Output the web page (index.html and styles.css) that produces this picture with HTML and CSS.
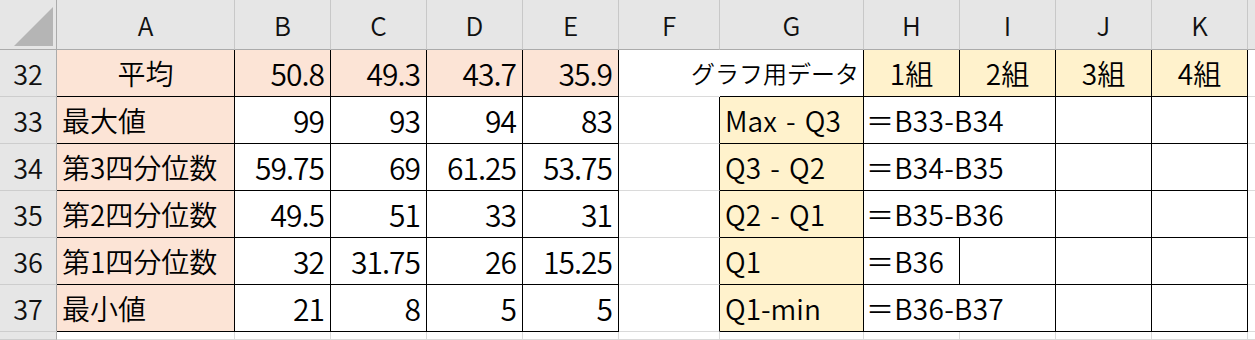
FILE: index.html
```html
<!DOCTYPE html>
<html lang="ja">
<head>
<meta charset="utf-8">
<title>Sheet</title>
<link rel="stylesheet" href="styles.css">
</head>
<body>
<div class="sheet">
  <!-- column headers -->
  <div class="corner"><svg width="56" height="49" viewBox="0 0 56 49"><polygon points="14,46 53,46 53,7" fill="#b5b5b5"/></svg></div>
  <div class="hd">A</div>
  <div class="hd">B</div>
  <div class="hd">C</div>
  <div class="hd">D</div>
  <div class="hd">E</div>
  <div class="hd">F</div>
  <div class="hd">G</div>
  <div class="hd">H</div>
  <div class="hd">I</div>
  <div class="hd">J</div>
  <div class="hd">K</div>
  <div class="hd hd-end"></div>

  <!-- row 32 -->
  <div class="rh">32</div>
  <div class="c pk bk ctr">平均</div>
  <div class="c pk bk r n">50.8</div>
  <div class="c pk bk r n">49.3</div>
  <div class="c pk bk r n">43.7</div>
  <div class="c pk bk r n">35.9</div>
  <div class="c noright"></div>
  <div class="c bk r label">グラフ用データ</div>
  <div class="c yl bk ctr">1組</div>
  <div class="c yl bk ctr">2組</div>
  <div class="c yl bk ctr">3組</div>
  <div class="c yl bk ctr">4組</div>
  <div class="c end"></div>

  <!-- row 33 -->
  <div class="rh">33</div>
  <div class="c pk bk">最大値</div>
  <div class="c bk r n">99</div>
  <div class="c bk r n">93</div>
  <div class="c bk r n">94</div>
  <div class="c bk r n">83</div>
  <div class="c brk"></div>
  <div class="c yl bk g">Max - Q3</div>
  <div class="c bk span2 f">＝B33-B34</div>
  <div class="c bk"></div>
  <div class="c bk"></div>
  <div class="c end"></div>

  <!-- row 34 -->
  <div class="rh">34</div>
  <div class="c pk bk">第3四分位数</div>
  <div class="c bk r n">59.75</div>
  <div class="c bk r n">69</div>
  <div class="c bk r n">61.25</div>
  <div class="c bk r n">53.75</div>
  <div class="c brk"></div>
  <div class="c yl bk g">Q3 - Q2</div>
  <div class="c bk span2 f">＝B34-B35</div>
  <div class="c bk"></div>
  <div class="c bk"></div>
  <div class="c end"></div>

  <!-- row 35 -->
  <div class="rh">35</div>
  <div class="c pk bk">第2四分位数</div>
  <div class="c bk r n">49.5</div>
  <div class="c bk r n">51</div>
  <div class="c bk r n">33</div>
  <div class="c bk r n">31</div>
  <div class="c brk"></div>
  <div class="c yl bk g">Q2 - Q1</div>
  <div class="c bk span2 f">＝B35-B36</div>
  <div class="c bk"></div>
  <div class="c bk"></div>
  <div class="c end"></div>

  <!-- row 36 -->
  <div class="rh">36</div>
  <div class="c pk bk">第1四分位数</div>
  <div class="c bk r n">32</div>
  <div class="c bk r n">31.75</div>
  <div class="c bk r n">26</div>
  <div class="c bk r n">15.25</div>
  <div class="c brk"></div>
  <div class="c yl bk g">Q1</div>
  <div class="c bk f">＝B36</div>
  <div class="c bk"></div>
  <div class="c bk"></div>
  <div class="c bk"></div>
  <div class="c end"></div>

  <!-- row 37 -->
  <div class="rh">37</div>
  <div class="c pk bk">最小値</div>
  <div class="c bk r n">21</div>
  <div class="c bk r n">8</div>
  <div class="c bk r n">5</div>
  <div class="c bk r n">5</div>
  <div class="c brk"></div>
  <div class="c yl bk g">Q1-min</div>
  <div class="c bk span2 f">＝B36-B37</div>
  <div class="c bk"></div>
  <div class="c bk"></div>
  <div class="c end"></div>

  <!-- row 38 (partial) -->
  <div class="rh"></div>
  <div class="c"></div>
  <div class="c"></div>
  <div class="c"></div>
  <div class="c"></div>
  <div class="c"></div>
  <div class="c"></div>
  <div class="c"></div>
  <div class="c"></div>
  <div class="c"></div>
  <div class="c"></div>
  <div class="c"></div>
  <div class="c end"></div>
</div>
</body>
</html>
```

FILE: styles.css
```css
html, body {
  margin: 0;
  padding: 0;
  background: #ffffff;
  overflow: hidden;
}

.sheet {
  width: 1255px;
  height: 340px;
  display: grid;
  grid-template-columns: 57px 178px 96px 96px 96px 96px 101px 144px 96px 96px 96px 96px 1fr;
  grid-template-rows: 50px repeat(6, 47px) 1fr;
  font-family: "Noto Sans CJK JP", "Noto Sans", sans-serif;
  color: #000;
  overflow: hidden;
}

.sheet > div {
  box-sizing: border-box;
  min-width: 0;
}

.corner {
  background: #e6e6e6;
  border-right: 1px solid #ababab;
  border-bottom: 1px solid #ababab;
  overflow: hidden;
}

.corner svg {
  display: block;
}

.hd {
  background: #e6e6e6;
  border-right: 1px solid #c8c8c8;
  border-bottom: 1px solid #ababab;
  display: flex;
  align-items: center;
  justify-content: center;
  font-size: 26px;
  font-weight: 350;
  line-height: 1;
  color: #111;
  padding-top: 1px;
}

.hd-end {
  border-right: none;
}

.rh {
  background: #e6e6e6;
  border-right: 1px solid #ababab;
  border-bottom: 1px solid #cdcdcd;
  display: flex;
  align-items: center;
  justify-content: center;
  font-size: 27px;
  font-weight: 350;
  line-height: 1;
  color: #111;
}

.c {
  border-right: 1px solid #dadada;
  border-bottom: 1px solid #dadada;
  display: flex;
  align-items: center;
  justify-content: flex-start;
  padding: 0 5px 0 5px;
  font-size: 28px;
  font-weight: 350;
  line-height: 1;
  white-space: nowrap;
  background: #ffffff;
}

.pk { background: #fce4d6; }
.yl { background: #fff2cc; }

.bk {
  border-right-color: #000;
  border-bottom-color: #000;
}

.brk { border-right-color: #000; }

.noright { border-right-color: transparent; }

.end { border-right: none; }

.r { justify-content: flex-end; }
.ctr { justify-content: center; }

.n {
  font-size: 30px;
  letter-spacing: -1px;
  padding-right: 6px;
}

.g { word-spacing: 3px; }

.label {
  padding-right: 4px;
  font-size: 24px;
  overflow: visible;
}

.f {
  padding-left: 2px;
  letter-spacing: 0.3px;
}

.span2 { grid-column: span 2; }
```
